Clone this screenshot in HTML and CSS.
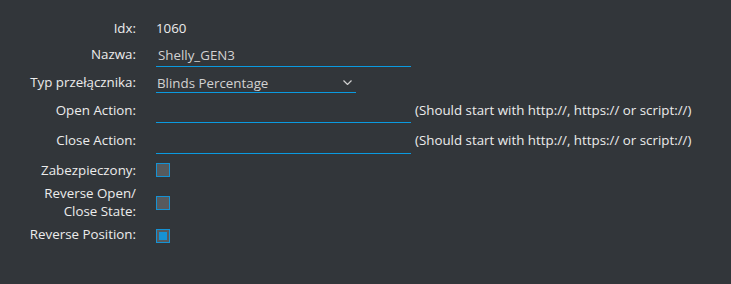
FILE: index.html
```html
<!DOCTYPE html>
<html lang="pl">
<head>
    <meta charset="UTF-8">
    <meta name="viewport" content="width=device-width, initial-scale=1.0">
    <title>Edit Switch</title>
    <link rel="stylesheet" href="styles.css">
</head>
<body>
    <form class="device-form">
        <div class="row row-idx">
            <label class="label">Idx:</label>
            <span class="value">1060</span>
        </div>
        <div class="row row-input">
            <label class="label" for="name">Nazwa:</label>
            <div class="field"><input type="text" id="name" class="text-input" value="Shelly_GEN3" /></div>
        </div>
        <div class="row row-input">
            <label class="label" for="switchType">Typ przełącznika:</label>
            <div class="select">
                <span>Blinds Percentage</span>
                <svg class="chevron" width="9" height="5" viewBox="0 0 9 5">
                    <path d="M0.5 0.5 L4.5 4.5 L8.5 0.5" fill="none" stroke="#d0d0d0" stroke-width="1.2" />
                </svg>
            </div>
        </div>
        <div class="row row-input">
            <label class="label" for="openAction">Open Action:</label>
            <div class="field"><input type="text" id="openAction" class="text-input" /></div>
            <span class="hint">(Should start with http://, https:// or script://)</span>
        </div>
        <div class="row row-close">
            <label class="label" for="closeAction">Close Action:</label>
            <div class="field"><input type="text" id="closeAction" class="text-input" /></div>
            <span class="hint">(Should start with http://, https:// or script://)</span>
        </div>
        <div class="row row-check">
            <label class="label">Zabezpieczony:</label>
            <span class="checkbox"></span>
        </div>
        <div class="row row-check-tall">
            <label class="label">Reverse Open/<br>Close State:</label>
            <span class="checkbox"></span>
        </div>
        <div class="row row-check row-last">
            <label class="label">Reverse Position:</label>
            <span class="checkbox checked"></span>
        </div>
    </form>
</body>
</html>
```

FILE: styles.css
```css
body {
    font-family: "Open Sans", Arial, sans-serif;
    font-size: 13.33px;
    background-color: #32363a;
    color: #ececec;
    margin: 0;
    padding: 15px 0 0 0;
}

.device-form {
    display: flex;
    flex-direction: column;
}

.row {
    display: flex;
    align-items: center;
    line-height: 18px;
}

.label {
    width: 136px;
    margin-right: 20px;
    text-align: right;
    flex-shrink: 0;
}

.row-idx {
    height: 26px;
}

.row-input {
    height: 28px;
}

.row-close {
    height: 34px;
}

.row-check {
    height: 22px;
}

.row-check-tall {
    height: 44px;
}

/* nudge the labels up so they sit on the same line as the reference */
.row-input .label,
.row-input .hint,
.row-check-tall .label {
    margin-bottom: 2px;
}

.row-close .label,
.row-close .hint,
.row-last .label {
    margin-bottom: 4px;
}

.field {
    width: 255px;
    height: 24px;
    box-sizing: border-box;
    border-bottom: 1px solid #0a9ae0;
    display: flex;
    align-items: center;
}

.text-input {
    -webkit-appearance: none;
    appearance: none;
    width: 100%;
    height: 21px;
    padding: 0 2px;
    margin: 0;
    background: transparent;
    border: none;
    color: #d2d2d2;
    font-family: inherit;
    font-size: 13.33px;
    outline: none;
}

.select {
    width: 200px;
    height: 20px;
    box-sizing: border-box;
    display: flex;
    align-items: center;
    justify-content: space-between;
    padding: 0 4px 0 1px;
    border-bottom: 1px solid #0a9ae0;
    color: #d2d2d2;
}

.chevron {
    display: block;
}

.hint {
    margin-left: 4px;
    white-space: nowrap;
}

.checkbox {
    width: 14px;
    height: 14px;
    box-sizing: border-box;
    border: 1px solid #1592d4;
    background-color: #575a5d;
    position: relative;
}

.checkbox.checked::after {
    content: "";
    position: absolute;
    left: 2px;
    top: 2px;
    width: 8px;
    height: 8px;
    background-color: #1592d4;
}
```
